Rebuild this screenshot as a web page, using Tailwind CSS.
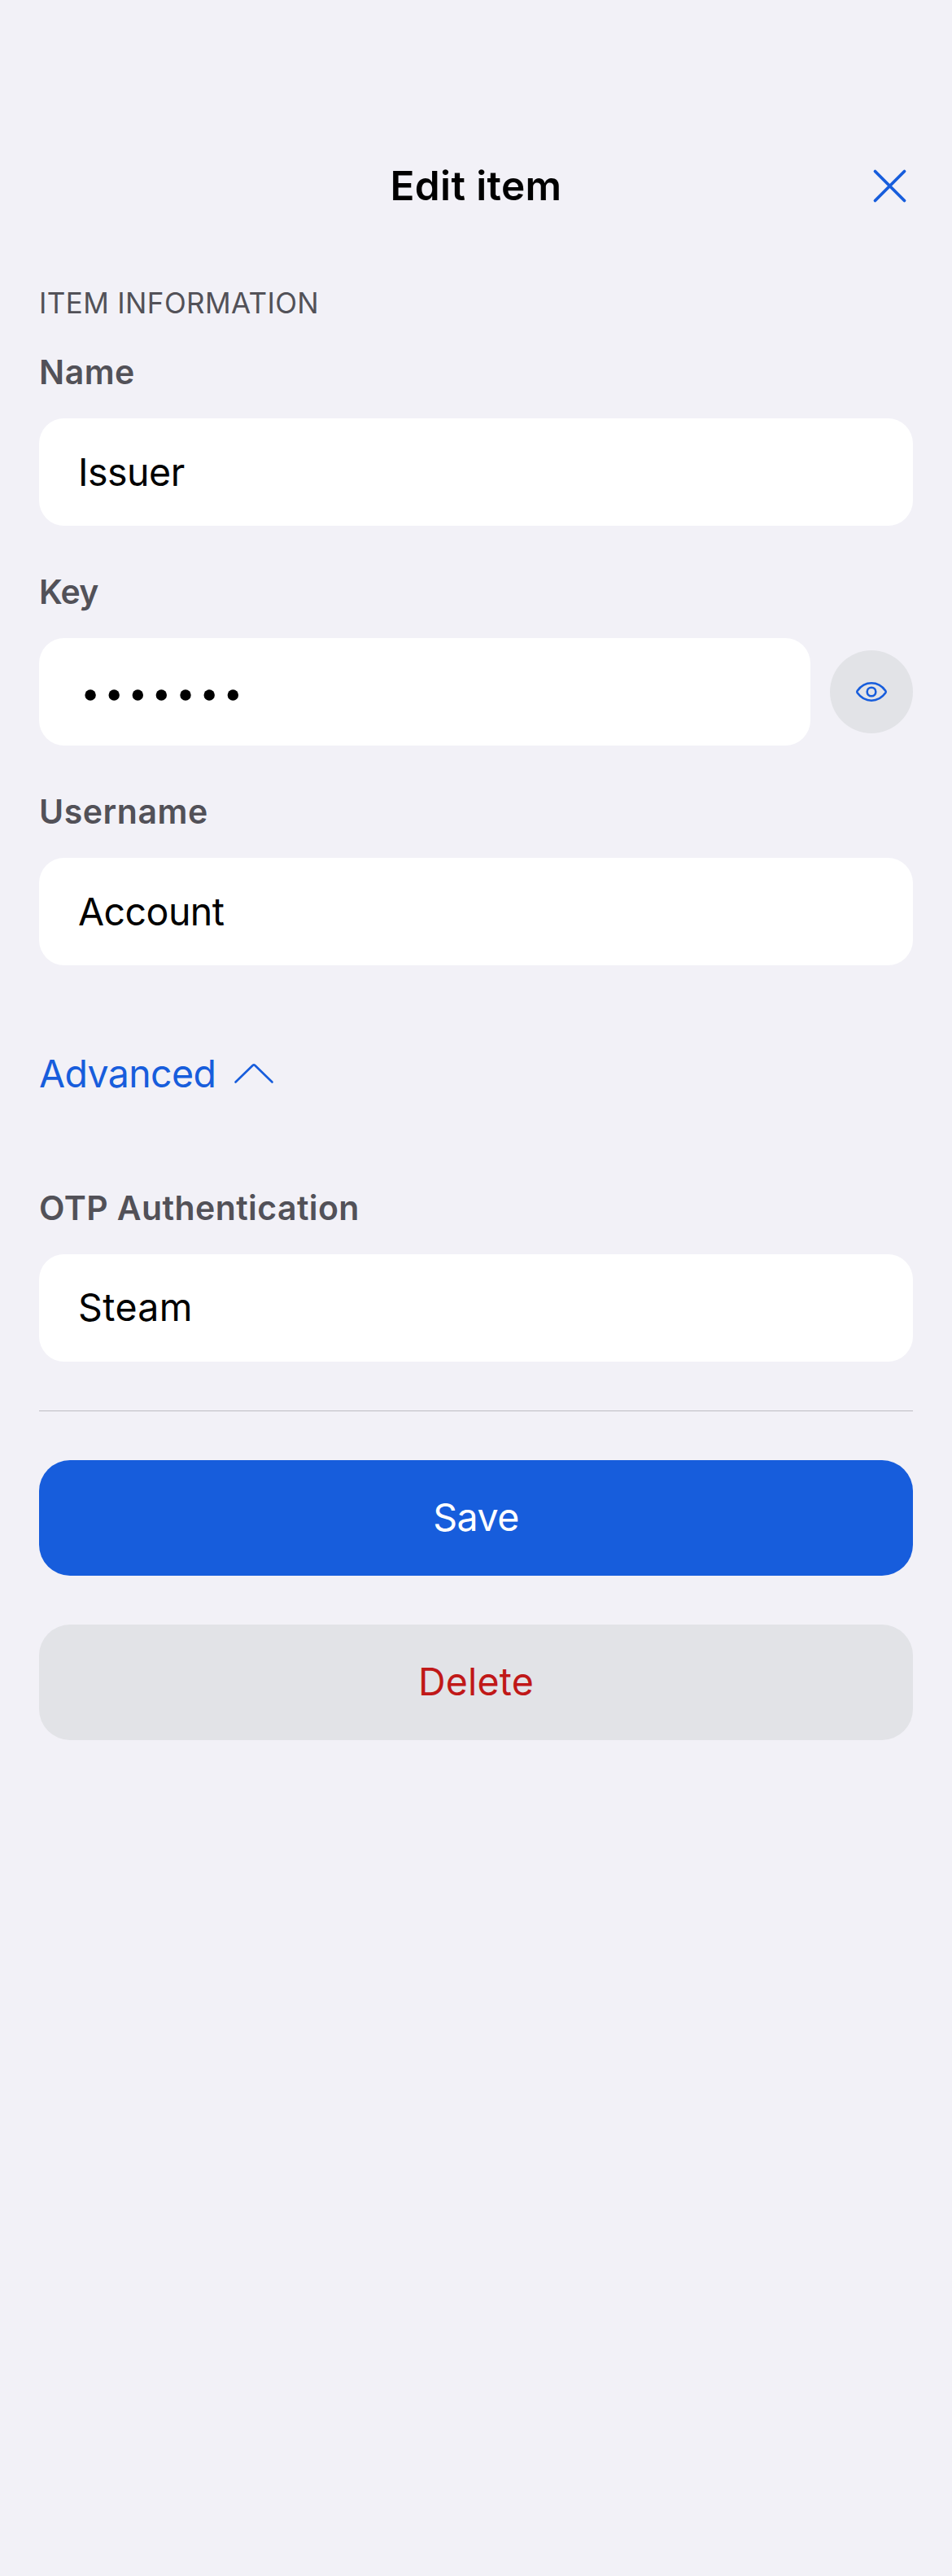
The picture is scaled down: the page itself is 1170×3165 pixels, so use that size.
<!DOCTYPE html>
<html lang="en">
<head>
<meta charset="utf-8">
<title>Edit item</title>
<script src="https://cdn.jsdelivr.net/npm/@tailwindcss/browser@4"></script>
</head>
<body class="bg-[#f2f1f7] font-['Inter',sans-serif] text-black">
<main class="flex min-h-[3165px] flex-col px-12 pt-[198px]">
  <header class="relative flex h-[60px] items-center justify-center">
    <h1 class="text-[49.5px] leading-[60px] font-semibold tracking-[0.4px]">Edit item</h1>
    <button class="absolute top-[9px] right-[7px]" aria-label="Close">
      <svg class="block size-[43px]" viewBox="0 0 43 43" fill="none" stroke="#175ddc" stroke-width="3.8" stroke-linecap="round"><path d="M3.5 3.5 39.5 39.5M39.5 3.5 3.5 39.5"/></svg>
    </button>
  </header>

  <h2 class="mt-[94px] h-10 text-[35px] leading-10 tracking-[0.37px] text-[#525158]">ITEM INFORMATION</h2>

  <section class="mt-10 flex flex-col gap-14">
    <div>
      <div class="h-[50px] text-[41px] leading-[50px] font-semibold tracking-[0.5px] text-[#525158]">Name</div>
      <div class="mt-8 flex h-[132px] items-center rounded-[31px] bg-white px-12 pt-0.5 text-[46.5px] tracking-[-0.5px]">Issuer</div>
    </div>
    <div>
      <div class="h-[50px] text-[41px] leading-[50px] font-semibold tracking-[-0.7px] text-[#525158]">Key</div>
      <div class="mt-8 flex items-start gap-6">
        <div class="flex h-[132px] flex-1 items-center rounded-[31px] bg-white px-12">
          <svg class="mt-[7px] block h-4 w-[200px]" viewBox="0 0 200 16"><g fill="#000"><circle cx="15.1" cy="8" r="6.7"/><circle cx="44.2" cy="8" r="6.7"/><circle cx="73.3" cy="8" r="6.7"/><circle cx="102.3" cy="8" r="6.7"/><circle cx="132" cy="8" r="6.7"/><circle cx="161.2" cy="8" r="6.7"/><circle cx="190.3" cy="8" r="6.7"/></g></svg>
        </div>
        <button class="mt-[15px] flex size-[102px] items-center justify-center rounded-full bg-[#e2e3e7]" aria-label="Show key">
          <svg class="block h-[26px] w-10" viewBox="0 0 40 26" fill="none" stroke="#175ddc" stroke-width="2.6"><path d="M2.7 14.3Q1.8 13 2.7 11.7C7 5.8 13 2.3 20 2.3S33 5.8 37.3 11.7Q38.2 13 37.3 14.3C33 20.2 27 23.7 20 23.7S7 20.2 2.7 14.3Z"/><circle cx="20" cy="13" r="5.3"/></svg>
        </button>
      </div>
    </div>
    <div>
      <div class="h-[50px] text-[41px] leading-[50px] font-semibold tracking-[0.55px] text-[#525158]">Username</div>
      <div class="mt-8 flex h-[132px] items-center rounded-[31px] bg-white px-12 pt-0.5 text-[46.5px] tracking-[-0.55px]">Account</div>
    </div>
  </section>

  <button class="mt-[103px] flex h-[60px] items-center gap-[21px] text-[46.5px] leading-[60px] tracking-[-0.65px] text-[#175ddc]">
    Advanced
    <svg class="block h-7 w-[52px]" viewBox="0 0 52 28" fill="none" stroke="#175ddc" stroke-width="2.6" stroke-linecap="round" stroke-linejoin="round"><path d="M3.5 24.5 24.6 4Q26 2.8 27.4 4L48.5 24.5"/></svg>
  </button>

  <div class="mt-[110px] h-[50px] text-[41px] leading-[50px] font-semibold tracking-[0.42px] text-[#525158]">OTP Authentication</div>
  <div class="mt-8 flex h-[132px] items-center rounded-[31px] bg-white px-12 text-[46.5px] tracking-[0.4px]">Steam</div>

  <div class="mt-[60px] h-px bg-[#bdbcc2]"></div>

  <button class="mt-[60px] h-[142px] rounded-[38px] bg-[#175ddc] text-[46.5px] tracking-[-0.5px] text-white">Save</button>
  <button class="mt-[60px] h-[142px] rounded-[38px] bg-[#e2e3e7] text-[46.5px] tracking-[0.2px] text-[#c01818]">Delete</button>
</main>
</body>
</html>
